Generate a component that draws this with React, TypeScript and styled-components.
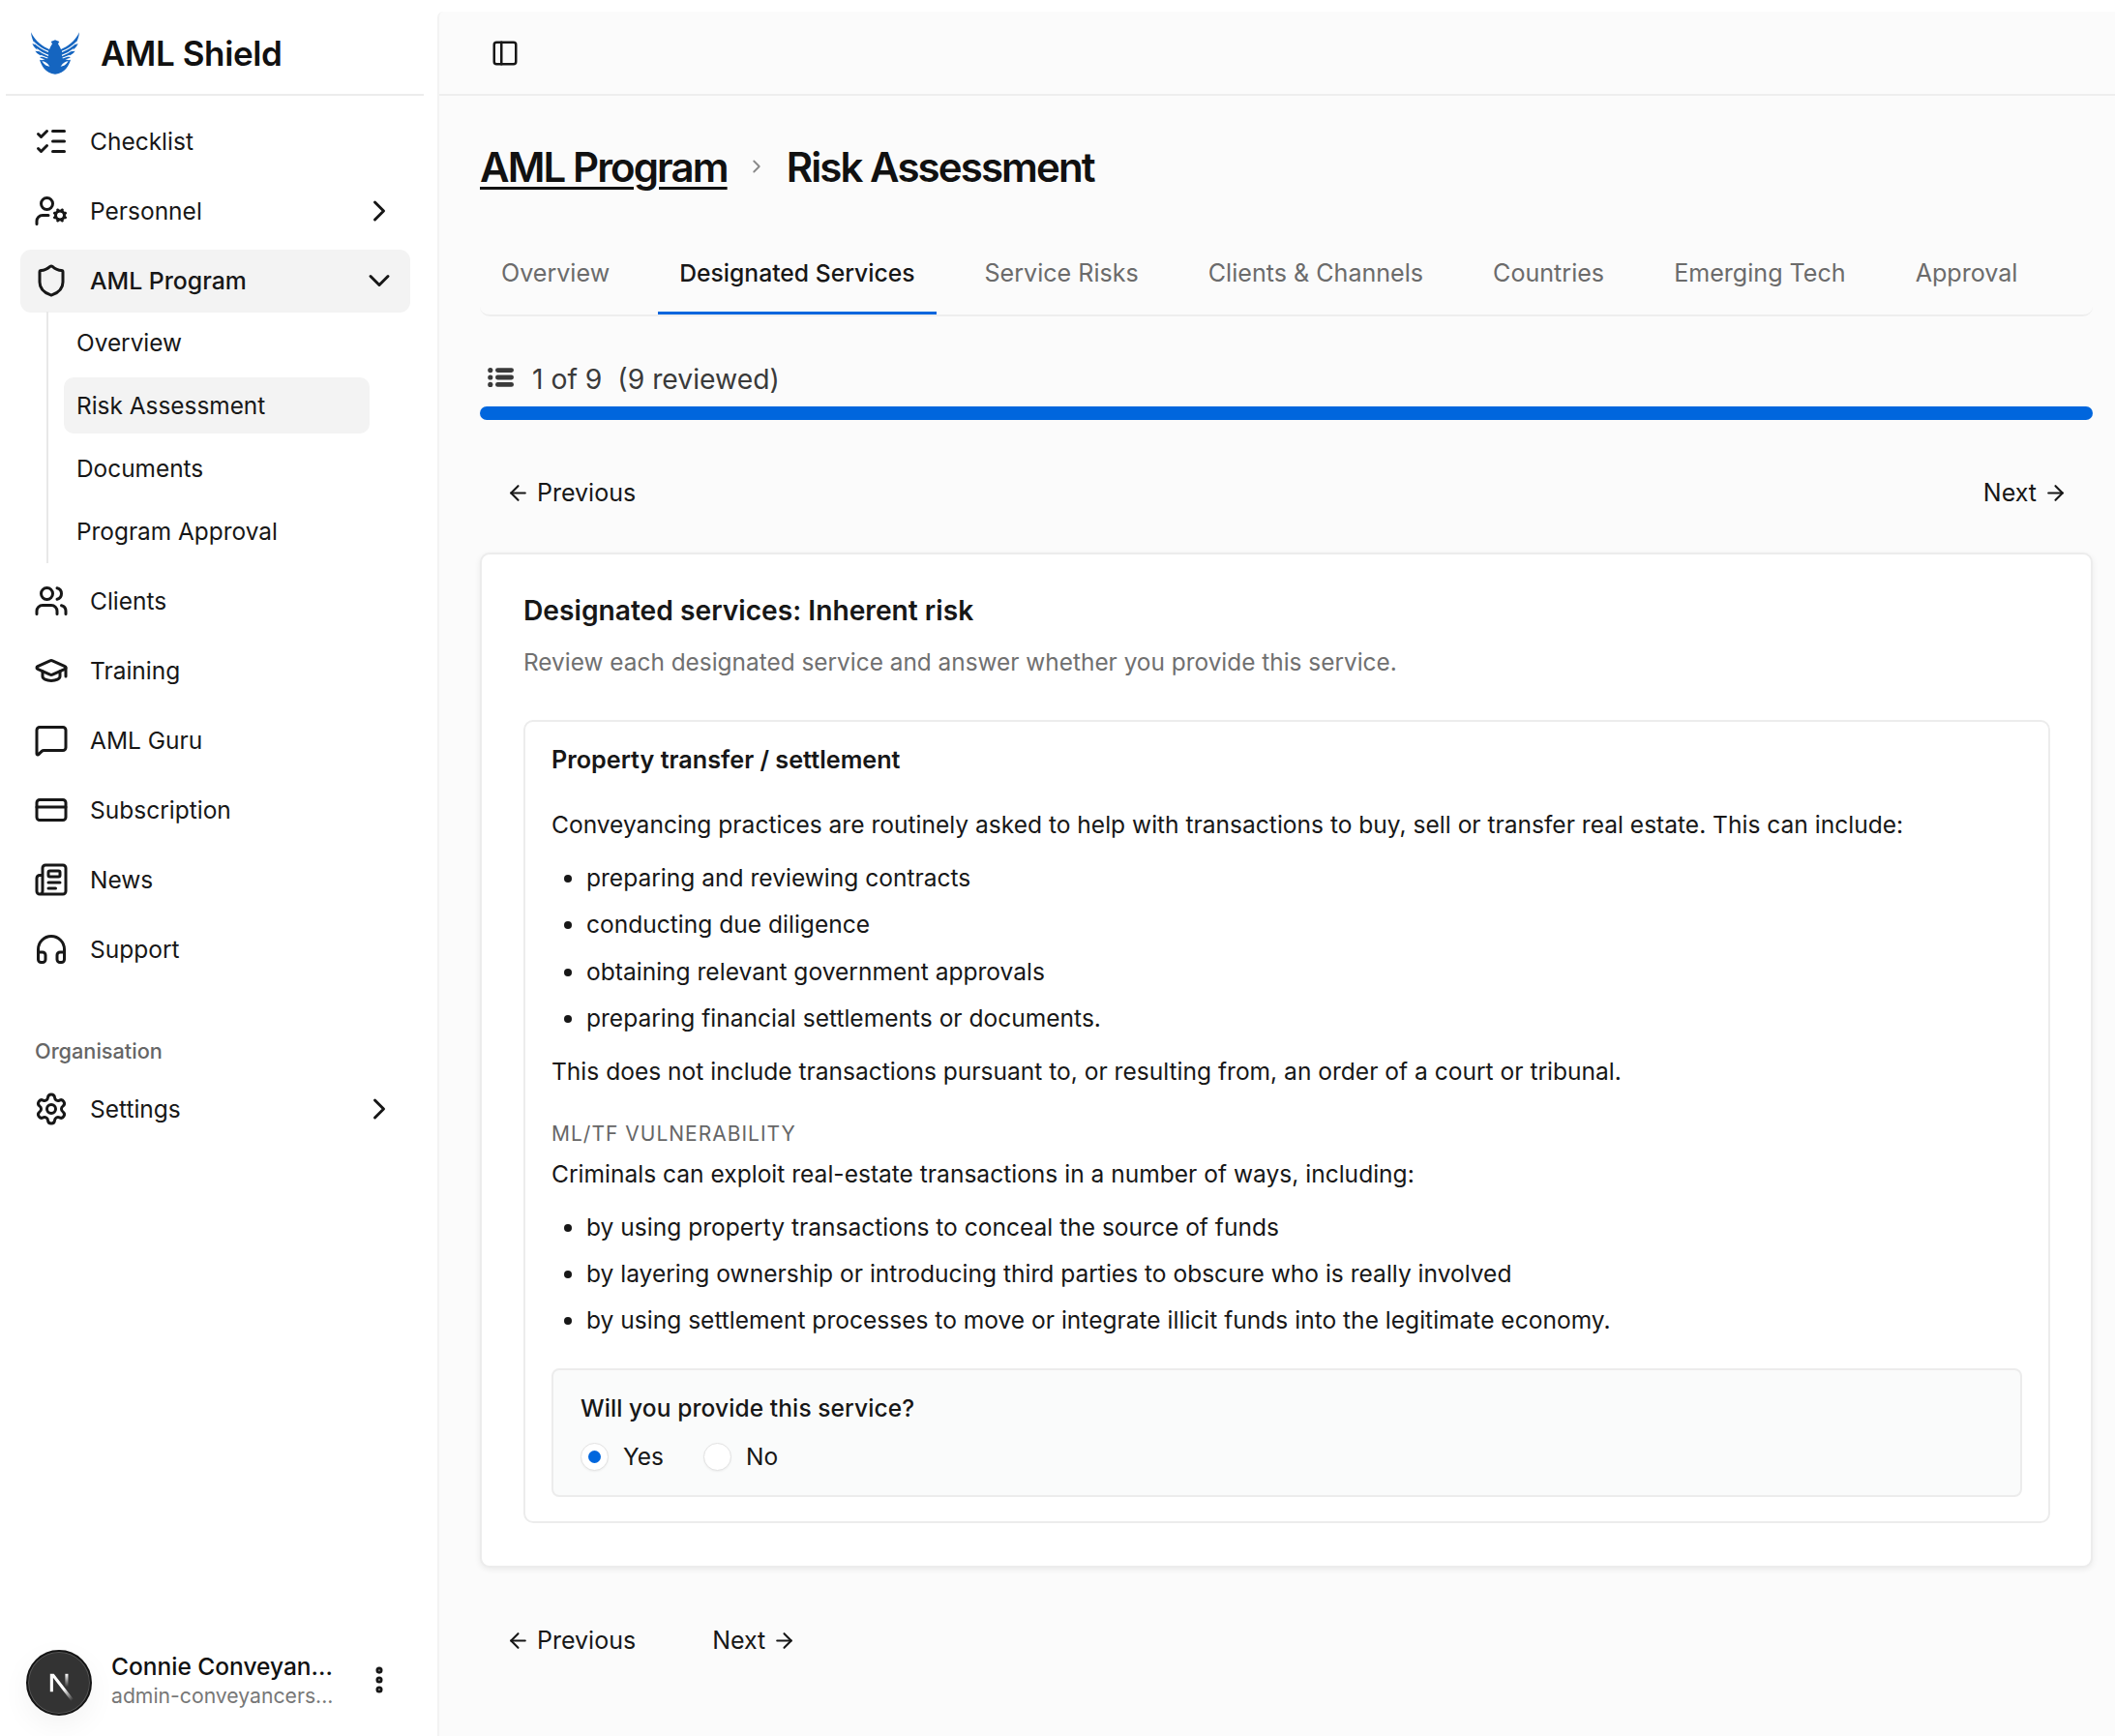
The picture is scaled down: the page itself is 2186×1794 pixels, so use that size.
import React from 'react';
import styled, { createGlobalStyle } from 'styled-components';
import {
  ArrowLeft,
  ArrowRight,
  ChevronDown,
  ChevronRight,
  CreditCard,
  EllipsisVertical,
  GraduationCap,
  Headphones,
  ListChecks,
  MessageSquare,
  Newspaper,
  PanelLeft,
  Settings,
  Shield,
  UserCog,
  Users,
} from 'lucide-react';

const GlobalStyle = createGlobalStyle`
  * { box-sizing: border-box; }
  html, body { margin: 0; padding: 0; background: #fff; }
  body {
    font-family: Inter, "Noto Sans", sans-serif;
    color: #171717;
  }
`;

const Shell = styled.div`
  display: flex;
  width: 2186px;
  height: 1794px;
  overflow: hidden;
`;

const Sidebar = styled.aside`
  display: flex;
  flex-direction: column;
  flex: 0 0 452px;
  height: 100%;
  background: #fff;
`;

const Brand = styled.div`
  display: flex;
  align-items: center;
  gap: 22px;
  flex: 0 0 99px;
  margin: 0 14px 0 6px;
  padding: 12px 0 0 26px;
  border-bottom: 2px solid #ececec;
`;

const BrandName = styled.span`
  font-size: 35px;
  font-weight: 600;
  letter-spacing: -0.4px;
  color: #111;
`;

const Nav = styled.nav`
  display: flex;
  flex-direction: column;
  gap: 7px;
  padding: 14.5px 28px 0 21px;
`;

const NavRow = styled.div<{ $active?: boolean }>`
  display: flex;
  align-items: center;
  gap: 22px;
  height: 65px;
  padding: 0 14px;
  border-radius: 11px;
  background: ${(p) => (p.$active ? '#f3f3f3' : 'transparent')};
  font-size: ${(p) => (p.$active ? 24.8 : 24.5)}px;
  font-weight: ${(p) => (p.$active ? 500 : 400)};
  color: #171717;
  svg { flex: none; }
`;

const NavLabel = styled.span`
  flex: 1;
`;

const SubNav = styled.div`
  display: flex;
  flex-direction: column;
  gap: 7px;
  margin: -7.5px 0 0 26.5px;
  padding: 3px 0 3.5px 16px;
  border-left: 2px solid #e8e8e8;
`;

const SubRow = styled.div<{ $active?: boolean }>`
  display: flex;
  align-items: center;
  width: 316px;
  height: 58px;
  padding: 0 13.5px;
  border-radius: 10px;
  background: ${(p) => (p.$active ? '#f3f3f3' : 'transparent')};
  font-size: 24.4px;
  color: #171717;
`;

const GroupLabel = styled.div`
  height: 40px;
  margin: 45px 0 1px 15px;
  font-size: 21.7px;
  line-height: 40px;
  font-weight: 500;
  color: #666;
`;

const UserBox = styled.div`
  display: flex;
  align-items: center;
  margin-top: auto;
  padding: 0 43px 21px 27px;
  svg { flex: none; }
`;

const Avatar = styled.div`
  display: flex;
  align-items: center;
  justify-content: center;
  flex: none;
  width: 68px;
  height: 68px;
  border-radius: 50%;
  background: #333;
  border: 2px solid #151515;
  box-shadow: inset 0 0 0 1px #555, 0 10px 30px rgba(0, 0, 0, 0.05);
`;

const UserText = styled.div`
  display: flex;
  flex-direction: column;
  flex: 1;
  margin-left: 20px;
  padding-bottom: 5px;
  min-width: 0;
`;

const UserName = styled.span`
  font-size: 24.5px;
  line-height: 31px;
  font-weight: 500;
  color: #111;
`;

const UserMail = styled.span`
  font-size: 21.2px;
  line-height: 28px;
  color: #777;
`;

const UserMenu = styled.span`
  display: flex;
  margin-bottom: 6px;
`;

const Main = styled.main`
  display: flex;
  flex-direction: column;
  flex: 1;
  min-width: 0;
  margin-top: 12px;
  background: #fbfbfb;
  border-left: 2px solid #f3f3f3;
  border-top-left-radius: 6px;
`;

const TopBar = styled.header`
  display: flex;
  align-items: center;
  flex: 0 0 87px;
  padding: 0 0 0 53px;
  border-bottom: 2px solid #eeeeee;
  color: #171717;
`;

const Content = styled.div`
  display: flex;
  flex-direction: column;
  padding: 45px 23px 0 42px;
`;

const Crumbs = styled.div`
  display: flex;
  align-items: center;
  height: 56px;
`;

const TitleLink = styled.a`
  font-size: 42px;
  font-weight: 600;
  letter-spacing: -1.9px;
  color: #111;
  text-decoration: underline;
  text-decoration-thickness: 3px;
  text-underline-offset: 5px;
`;

const CrumbSep = styled.span`
  display: flex;
  justify-content: center;
  width: 61px;
  color: #888;
`;

const Title = styled.h1`
  margin: 0;
  font-size: 42px;
  font-weight: 600;
  letter-spacing: -1.9px;
  color: #111;
`;

const Tabs = styled.div`
  display: flex;
  gap: 28px;
  height: 90px;
  margin-top: 37px;
  border-bottom: 2px solid #eeeeee;
  border-radius: 0 0 10px 10px;
`;

const Tab = styled.div<{ $active?: boolean }>`
  display: flex;
  align-items: center;
  height: 88px;
  padding: 5px 22px 0;
  border-bottom: 3px solid ${(p) => (p.$active ? '#0066dd' : 'transparent')};
  font-size: ${(p) => (p.$active ? 24.7 : 25.1)}px;
  font-weight: ${(p) => (p.$active ? 500 : 400)};
  color: ${(p) => (p.$active ? '#171717' : '#6b6b6b')};
`;

const Progress = styled.div`
  display: flex;
  align-items: center;
  gap: 19px;
  height: 40px;
  margin-top: 43px;
  padding-left: 8px;
  font-size: 28.3px;
  color: #3a3a3a;
  white-space: pre;
`;

const ProgressText = styled.span`
  padding-top: 3px;
`;

const Bar = styled.div`
  height: 14px;
  margin: 10px 0 45px;
  border-radius: 7px;
  background: #0066dd;
`;

const Pager = styled.div<{ $spread?: boolean }>`
  display: flex;
  justify-content: ${(p) => (p.$spread ? 'space-between' : 'flex-start')};
  gap: 26px;
  height: 60px;
`;

const PagerBtn = styled.button`
  display: flex;
  align-items: center;
  gap: 7px;
  height: 60px;
  padding: 0 26px 0 27px;
  border: 0;
  background: transparent;
  font-family: inherit;
  font-size: 25px;
  color: #171717;
`;

const Card = styled.section`
  display: flex;
  flex-direction: column;
  margin: 32px 0 45px;
  padding: 38px 42px 44px 43px;
  background: #fff;
  border: 2px solid #ececec;
  border-radius: 10px;
  box-shadow: 0 2px 6px rgba(0, 0, 0, 0.07);
`;

const CardTitle = styled.h2`
  margin: 0;
  font-size: 28.2px;
  line-height: 40px;
  font-weight: 600;
  color: #171717;
`;

const CardSub = styled.p`
  margin: 15px 0 0;
  font-size: 24.4px;
  line-height: 36px;
  color: #707070;
`;

const Service = styled.div`
  margin-top: 42px;
  padding: 21px 27px 25px;
  border: 2px solid #ececec;
  border-radius: 10px;
`;

const ServiceTitle = styled.h3`
  margin: 0;
  font-size: 25.2px;
  line-height: 36px;
  font-weight: 600;
  color: #171717;
`;

const Para = styled.p<{ $top?: number }>`
  margin: ${(p) => p.$top ?? 17}px 0 0;
  font-size: 24.55px;
  line-height: 38px;
  color: #171717;
`;

const Bullets = styled.ul`
  display: flex;
  flex-direction: column;
  gap: 10.3px;
  margin: 17px 0 0;
  padding: 0 0 0 36px;
  font-size: 24.55px;
  line-height: 38px;
  color: #171717;
`;

const Eyebrow = styled.div`
  margin-top: 31px;
  font-size: 21px;
  line-height: 30px;
  letter-spacing: 1px;
  color: #666;
`;

const Question = styled.div`
  margin-top: 31px;
  padding: 20px 28px 26px;
  background: #fafbfb;
  border: 2px solid #ececec;
  border-radius: 8px;
`;

const QuestionText = styled.div`
  font-size: 24.5px;
  line-height: 38px;
  font-weight: 500;
  letter-spacing: 0.1px;
  color: #171717;
`;

const RadioRow = styled.div`
  display: flex;
  gap: 41px;
  margin-top: 17px;
`;

const RadioItem = styled.label`
  display: flex;
  align-items: center;
  gap: 15px;
  height: 28px;
  font-size: 24.5px;
  color: #171717;
`;

const RadioDot = styled.span<{ $on?: boolean }>`
  display: flex;
  align-items: center;
  justify-content: center;
  width: 29px;
  height: 29px;
  border-radius: 50%;
  background: #fff;
  border: 1px solid #e2e2e2;
  box-shadow: 0 1px 2px rgba(0, 0, 0, 0.05);
  &::after {
    content: '';
    display: ${(p) => (p.$on ? 'block' : 'none')};
    width: 13px;
    height: 13px;
    border-radius: 50%;
    background: #0066dd;
  }
`;

// logo is a hand traced eagle, left half mirrored for the right half
const EagleHalf = () => (
  <>
    <path d="M75 24 L62 29 L66 36 C62 42 59 48 57 53 C38 45 14 30 0 0 C1 16 7 30 14 39 L4 35 C9 48 20 56 29 60 L13 58 C20 68 30 73 40 75 L27 77 C32 81 38 83 44 84 C36 87 32 87 27 85 C32 102 44 126 75 130 Z" />
    <path d="M34 90 C42 90 50 94 58 106 C50 106 42 102 34 90 Z" fill="#fff" />
    <path
      d="M8 30 C22 44 38 54 54 60 M18 52 C30 62 42 68 54 72 M30 72 C38 76 46 78 52 80"
      fill="none"
      stroke="#fff"
      strokeWidth="3.5"
    />
  </>
);

const EagleLogo = () => (
  <svg width="50" height="44" viewBox="0 0 150 130" fill="#1565c0">
    <EagleHalf />
    <g transform="matrix(-1 0 0 1 150 0)">
      <EagleHalf />
    </g>
  </svg>
);

const NextMark = () => (
  <svg width="46" height="46" viewBox="0 0 180 180" fill="none">
    <defs>
      <linearGradient id="nxa" x1="109" y1="116.5" x2="144.5" y2="160.5" gradientUnits="userSpaceOnUse">
        <stop stopColor="#fff" />
        <stop offset="1" stopColor="#fff" stopOpacity="0" />
      </linearGradient>
      <linearGradient id="nxb" x1="121" y1="54" x2="120.8" y2="106.9" gradientUnits="userSpaceOnUse">
        <stop stopColor="#fff" />
        <stop offset="1" stopColor="#fff" stopOpacity="0" />
      </linearGradient>
    </defs>
    <path
      d="M149.508 157.52L69.142 54H54V125.97H66.1136V69.3836L139.999 164.845C143.333 162.614 146.509 160.165 149.508 157.52Z"
      fill="url(#nxa)"
    />
    <rect x="115" y="54" width="12" height="72" fill="url(#nxb)" />
  </svg>
);

const ProgressIcon = () => (
  <svg width="27" height="20" viewBox="0 0 27 20" fill="#3a3a3a">
    <circle cx="2.8" cy="2.6" r="2.6" />
    <circle cx="2.8" cy="10" r="2.6" />
    <circle cx="2.8" cy="17.4" r="2.6" />
    <rect x="8" y="0.2" width="19" height="4.8" rx="2.4" />
    <rect x="8" y="7.6" width="19" height="4.8" rx="2.4" />
    <rect x="8" y="15" width="19" height="4.8" rx="2.4" />
  </svg>
);

const App = () => (
  <Shell>
    <GlobalStyle />
    <Sidebar>
      <Brand>
        <EagleLogo />
        <BrandName>AML Shield</BrandName>
      </Brand>
      <Nav>
        <NavRow>
          <ListChecks size={36} />
          <NavLabel>Checklist</NavLabel>
        </NavRow>
        <NavRow>
          <UserCog size={36} />
          <NavLabel>Personnel</NavLabel>
          <ChevronRight size={36} />
        </NavRow>
        <NavRow $active>
          <Shield size={36} />
          <NavLabel>AML Program</NavLabel>
          <ChevronDown size={36} />
        </NavRow>
        <SubNav>
          <SubRow>Overview</SubRow>
          <SubRow $active>Risk Assessment</SubRow>
          <SubRow>Documents</SubRow>
          <SubRow>Program Approval</SubRow>
        </SubNav>
        <NavRow>
          <Users size={36} />
          <NavLabel>Clients</NavLabel>
        </NavRow>
        <NavRow>
          <GraduationCap size={36} />
          <NavLabel>Training</NavLabel>
        </NavRow>
        <NavRow>
          <MessageSquare size={36} />
          <NavLabel>AML Guru</NavLabel>
        </NavRow>
        <NavRow>
          <CreditCard size={36} />
          <NavLabel>Subscription</NavLabel>
        </NavRow>
        <NavRow>
          <Newspaper size={36} />
          <NavLabel>News</NavLabel>
        </NavRow>
        <NavRow>
          <Headphones size={36} />
          <NavLabel>Support</NavLabel>
        </NavRow>
        <GroupLabel>Organisation</GroupLabel>
        <NavRow>
          <Settings size={36} />
          <NavLabel>Settings</NavLabel>
          <ChevronRight size={36} />
        </NavRow>
      </Nav>
      <UserBox>
        <Avatar>
          <NextMark />
        </Avatar>
        <UserText>
          <UserName>Connie Conveyan...</UserName>
          <UserMail>admin-conveyancers...</UserMail>
        </UserText>
        <UserMenu>
          <EllipsisVertical size={34} strokeWidth={3} />
        </UserMenu>
      </UserBox>
    </Sidebar>
    <Main>
      <TopBar>
        <PanelLeft size={30} />
      </TopBar>
      <Content>
        <Crumbs>
          <TitleLink>AML Program</TitleLink>
          <CrumbSep>
            <ChevronRight size={22} />
          </CrumbSep>
          <Title>Risk Assessment</Title>
        </Crumbs>
        <Tabs>
          <Tab>Overview</Tab>
          <Tab $active>Designated Services</Tab>
          <Tab>Service Risks</Tab>
          <Tab>Clients &amp; Channels</Tab>
          <Tab>Countries</Tab>
          <Tab>Emerging Tech</Tab>
          <Tab>Approval</Tab>
        </Tabs>
        <Progress>
          <ProgressIcon />
          <ProgressText>1 of 9  (9 reviewed)</ProgressText>
        </Progress>
        <Bar />
        <Pager $spread>
          <PagerBtn>
            <ArrowLeft size={25} />
            Previous
          </PagerBtn>
          <PagerBtn>
            Next
            <ArrowRight size={25} />
          </PagerBtn>
        </Pager>
        <Card>
          <CardTitle>Designated services: Inherent risk</CardTitle>
          <CardSub>Review each designated service and answer whether you provide this service.</CardSub>
          <Service>
            <ServiceTitle>Property transfer / settlement</ServiceTitle>
            <Para $top={30}>
              Conveyancing practices are routinely asked to help with transactions to buy, sell or transfer real
              estate. This can include:
            </Para>
            <Bullets>
              <li>preparing and reviewing contracts</li>
              <li>conducting due diligence</li>
              <li>obtaining relevant government approvals</li>
              <li>preparing financial settlements or documents.</li>
            </Bullets>
            <Para>This does not include transactions pursuant to, or resulting from, an order of a court or tribunal.</Para>
            <Eyebrow>ML/TF VULNERABILITY</Eyebrow>
            <Para $top={7}>Criminals can exploit real-estate transactions in a number of ways, including:</Para>
            <Bullets>
              <li>by using property transactions to conceal the source of funds</li>
              <li>by layering ownership or introducing third parties to obscure who is really involved</li>
              <li>by using settlement processes to move or integrate illicit funds into the legitimate economy.</li>
            </Bullets>
            <Question>
              <QuestionText>Will you provide this service?</QuestionText>
              <RadioRow>
                <RadioItem>
                  <RadioDot $on />
                  Yes
                </RadioItem>
                <RadioItem>
                  <RadioDot />
                  No
                </RadioItem>
              </RadioRow>
            </Question>
          </Service>
        </Card>
        <Pager>
          <PagerBtn>
            <ArrowLeft size={25} />
            Previous
          </PagerBtn>
          <PagerBtn>
            Next
            <ArrowRight size={25} />
          </PagerBtn>
        </Pager>
      </Content>
    </Main>
  </Shell>
);

export default App;
